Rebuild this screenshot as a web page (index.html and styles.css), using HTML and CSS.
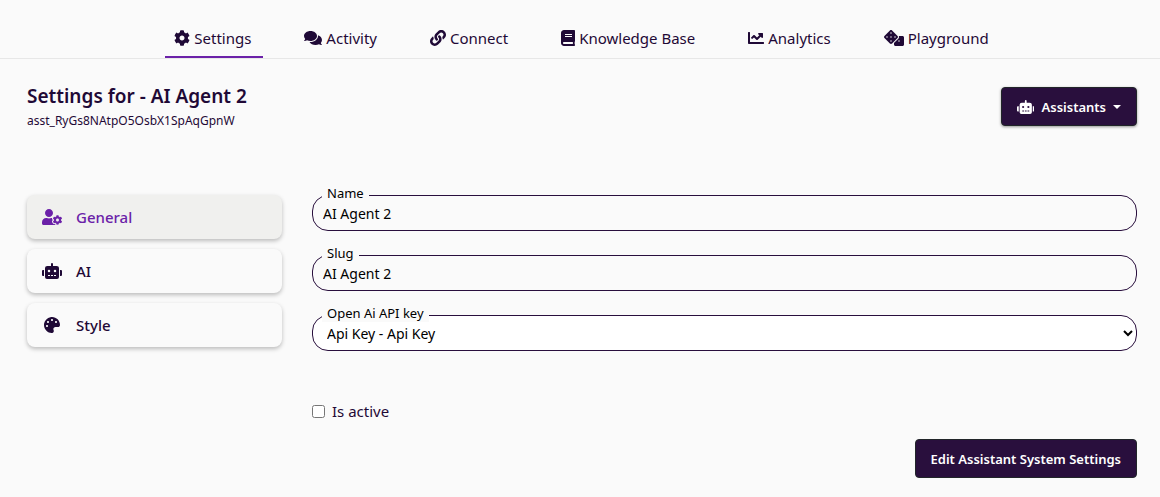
FILE: index.html
```html
<!DOCTYPE html>
<html lang="en">
<head>
  <meta charset="UTF-8">
  <meta name="viewport" content="width=device-width, initial-scale=1.0">
  <title>Assistant Settings</title>
  <link rel="stylesheet" href="styles.css">
</head>
<body>
  <!-- Robot icon is used in the button and the side menu -->
  <svg class="icon-defs" aria-hidden="true">
    <symbol id="icon-robot" viewBox="0 0 640 512">
      <path d="M32,224H64V416H32A31.962,31.962,0,0,1,0,384V256A31.962,31.962,0,0,1,32,224Zm512-48V448a64.063,64.063,0,0,1-64,64H160a64.063,64.063,0,0,1-64-64V176a79.974,79.974,0,0,1,80-80H288V32a32,32,0,0,1,64,0V96H464A79.974,79.974,0,0,1,544,176ZM264,256a40,40,0,1,0-40,40A39.997,39.997,0,0,0,264,256Zm-8,128H192v32h64Zm96,0H288v32h64ZM456,256a40,40,0,1,0-40,40A39.997,39.997,0,0,0,456,256Zm-8,128H384v32h64ZM640,256V384a31.962,31.962,0,0,1-32,32H576V224h32A31.962,31.962,0,0,1,640,256Z"/>
    </symbol>
  </svg>

  <nav class="tabs">
    <a href="#settings" class="tab active">
      <svg class="icon" viewBox="0 0 512 512"><path d="M487.4 315.7l-42.6-24.6c4.3-23.2 4.3-47 0-70.2l42.6-24.6c4.9-2.8 7.1-8.6 5.5-14-11.1-35.6-30-67.8-54.7-94.6-3.8-4.1-10-5.1-14.8-2.3L380.8 110c-17.9-15.4-38.5-27.3-60.8-35.1V25.8c0-5.6-3.9-10.5-9.4-11.7-36.7-8.2-74.3-7.8-109.2 0-5.5 1.2-9.4 6.1-9.4 11.7V75c-22.2 7.9-42.8 19.8-60.8 35.1L88.7 85.5c-4.9-2.8-11-1.9-14.8 2.3-24.7 26.7-43.6 58.9-54.7 94.6-1.7 5.4.6 11.2 5.5 14L67.3 221c-4.3 23.2-4.3 47 0 70.2l-42.6 24.6c-4.9 2.8-7.1 8.6-5.5 14 11.1 35.6 30 67.8 54.7 94.6 3.8 4.1 10 5.1 14.8 2.3l42.6-24.6c17.9 15.4 38.5 27.3 60.8 35.1v49.2c0 5.6 3.9 10.5 9.4 11.7 36.7 8.2 74.3 7.8 109.2 0 5.5-1.2 9.4-6.1 9.4-11.7v-49.2c22.2-7.9 42.8-19.8 60.8-35.1l42.6 24.6c4.9 2.8 11 1.9 14.8-2.3 24.7-26.7 43.6-58.9 54.7-94.6 1.5-5.5-.7-11.3-5.6-14.1zM256 336c-44.1 0-80-35.9-80-80s35.9-80 80-80 80 35.9 80 80-35.9 80-80 80z"/></svg>
      Settings
    </a>
    <a href="#activity" class="tab">
      <svg class="icon" viewBox="0 0 576 512"><path d="M416 192c0-88.4-93.1-160-208-160S0 103.6 0 192c0 34.3 14.1 65.9 38 92-13.4 30.2-35.5 54.2-35.8 54.5-2.2 2.3-2.8 5.7-1.5 8.7S4.8 352 8 352c36.6 0 66.9-12.3 88.7-25 32.2 15.7 70.3 25 111.3 25 114.9 0 208-71.6 208-160zm122 220c23.9-26 38-57.7 38-92 0-66.9-53.5-124.2-129.3-148.1.9 6.6 1.3 13.3 1.3 20.1 0 105.9-107.7 192-240 192-10.8 0-21.3-.8-31.7-1.9C207.8 439.6 281.8 480 368 480c41 0 79.1-9.2 111.3-25 21.8 12.7 52.1 25 88.7 25 3.2 0 6.1-1.9 7.3-4.8 1.3-2.9.7-6.3-1.5-8.7-.3-.3-22.4-24.2-35.8-54.5z"/></svg>
      Activity
    </a>
    <a href="#connect" class="tab">
      <svg class="icon" viewBox="0 0 512 512"><path d="M326.612 185.391c59.747 59.809 58.927 155.698.36 214.59-.11.12-.24.25-.36.37l-67.2 67.2c-59.27 59.27-155.699 59.262-214.96 0-59.27-59.26-59.27-155.7 0-214.96l37.106-37.106c9.84-9.84 26.786-3.3 27.294 10.606.648 17.722 3.826 35.527 9.69 52.721 1.986 5.822.567 12.262-3.783 16.612l-13.087 13.087c-28.026 28.026-28.905 73.66-1.155 101.96 28.024 28.579 74.086 28.749 102.325.51l67.2-67.19c28.191-28.191 28.073-73.757 0-101.83-3.701-3.694-7.429-6.564-10.341-8.569a16.037 16.037 0 0 1-6.947-12.606c-.396-10.567 3.348-21.456 11.698-29.806l21.054-21.055c5.521-5.521 14.182-6.199 20.584-1.731a152.482 152.482 0 0 1 20.522 17.197zM467.547 44.449c-59.261-59.262-155.69-59.27-214.96 0l-67.2 67.2c-.12.12-.25.25-.36.37-58.566 58.892-59.387 154.781.36 214.59a152.454 152.454 0 0 0 20.521 17.196c6.402 4.468 15.064 3.789 20.584-1.731l21.054-21.055c8.35-8.35 12.094-19.239 11.698-29.806a16.037 16.037 0 0 0-6.947-12.606c-2.912-2.005-6.64-4.875-10.341-8.569-28.073-28.073-28.191-73.639 0-101.83l67.2-67.19c28.239-28.239 74.3-28.069 102.325.51 27.75 28.3 26.872 73.934-1.155 101.96l-13.087 13.087c-4.35 4.35-5.769 10.79-3.783 16.612 5.864 17.194 9.042 34.999 9.69 52.721.509 13.906 17.454 20.446 27.294 10.606l37.106-37.106c59.271-59.259 59.271-155.699.001-214.959z"/></svg>
      Connect
    </a>
    <a href="#knowledge" class="tab">
      <svg class="icon" viewBox="0 0 448 512"><path d="M448 360V24c0-13.3-10.7-24-24-24H96C43 0 0 43 0 96v320c0 53 43 96 96 96h328c13.3 0 24-10.7 24-24v-16c0-7.5-3.5-14.3-8.9-18.7-4.2-15.4-4.2-59.3 0-74.7 5.4-4.3 8.9-11.1 8.9-18.6zM128 134c0-3.3 2.7-6 6-6h212c3.3 0 6 2.7 6 6v20c0 3.3-2.7 6-6 6H134c-3.3 0-6-2.7-6-6v-20zm0 64c0-3.3 2.7-6 6-6h212c3.3 0 6 2.7 6 6v20c0 3.3-2.7 6-6 6H134c-3.3 0-6-2.7-6-6v-20zm253.4 250H96c-17.7 0-32-14.3-32-32 0-17.6 14.4-32 32-32h285.4c-1.9 17.1-1.9 46.9 0 64z"/></svg>
      Knowledge Base
    </a>
    <a href="#analytics" class="tab">
      <svg class="icon" viewBox="0 0 512 512"><path d="M496 384H64V80c0-8.84-7.16-16-16-16H16C7.16 64 0 71.16 0 80v336c0 17.67 14.33 32 32 32h464c8.84 0 16-7.16 16-16v-32c0-8.84-7.16-16-16-16zM464 96H345.94c-21.38 0-32.09 25.85-16.97 40.97l32.4 32.4L288 242.75l-73.37-73.37c-12.5-12.5-32.76-12.5-45.25 0l-68.69 68.69c-6.25 6.25-6.25 16.38 0 22.63l22.62 22.62c6.25 6.25 16.38 6.25 22.63 0L192 237.25l73.37 73.37c12.5 12.5 32.76 12.5 45.25 0l96-96 32.4 32.4c15.12 15.12 40.97 4.41 40.97-16.97V112c.01-8.84-7.15-16-15.99-16z"/></svg>
      Analytics
    </a>
    <a href="#playground" class="tab">
      <svg class="icon" viewBox="0 0 640 512"><path d="M592 192H473.26c12.69 29.59 7.12 65.2-17 89.32L320 417.58V464c0 26.51 21.49 48 48 48h224c26.51 0 48-21.49 48-48V240c0-26.51-21.49-48-48-48zM480 376c-13.25 0-24-10.75-24-24 0-13.26 10.75-24 24-24s24 10.74 24 24c0 13.25-10.75 24-24 24zm-46.37-186.7L258.7 14.37c-19.16-19.16-50.23-19.16-69.39 0L14.37 189.3c-19.16 19.16-19.16 50.23 0 69.39L189.3 433.63c19.16 19.16 50.23 19.16 69.39 0L433.63 258.7c19.16-19.17 19.16-50.24 0-69.4zM96 248c-13.25 0-24-10.75-24-24 0-13.26 10.75-24 24-24s24 10.74 24 24c0 13.25-10.75 24-24 24zm128 128c-13.25 0-24-10.75-24-24 0-13.26 10.75-24 24-24s24 10.74 24 24c0 13.25-10.75 24-24 24zm0-128c-13.25 0-24-10.75-24-24 0-13.26 10.75-24 24-24s24 10.74 24 24c0 13.25-10.75 24-24 24zm0-128c-13.25 0-24-10.75-24-24 0-13.26 10.75-24 24-24s24 10.74 24 24c0 13.25-10.75 24-24 24zm128 128c-13.25 0-24-10.75-24-24 0-13.26 10.75-24 24-24s24 10.74 24 24c0 13.25-10.75 24-24 24z"/></svg>
      Playground
    </a>
  </nav>

  <main class="container">
    <header class="page-header">
      <div>
        <h1>Settings for - AI Agent 2</h1>
        <p class="assistant-id">asst_RyGs8NAtpO5OsbX1SpAqGpnW</p>
      </div>
      <button type="button" class="btn btn-shadow">
        <svg class="icon btn-icon" viewBox="0 0 640 512"><use href="#icon-robot"/></svg>
        Assistants
        <span class="caret"></span>
      </button>
    </header>

    <div class="row">
      <aside class="sidebar">
        <a href="#general" class="menu-item active">
          <span class="menu-icon">
            <svg class="icon" viewBox="0 0 640 512"><path d="M610.5 373.3c2.6-14.1 2.6-28.5 0-42.6l25.8-14.9c3-1.7 4.3-5.2 3.3-8.5-6.7-21.6-18.2-41.2-33.2-57.4-2.3-2.5-6-3.1-9-1.4l-25.8 14.9c-10.9-9.3-23.4-16.5-36.9-21.3v-29.8c0-3.4-2.4-6.4-5.7-7.1-22.3-5-45-4.8-66.2 0-3.3.7-5.7 3.7-5.7 7.1v29.8c-13.5 4.8-26 12-36.9 21.3l-25.8-14.9c-2.9-1.7-6.7-1.1-9 1.4-15 16.2-26.5 35.8-33.2 57.4-1 3.3.4 6.8 3.3 8.5l25.8 14.9c-2.6 14.1-2.6 28.5 0 42.6l-25.8 14.9c-3 1.7-4.3 5.2-3.3 8.5 6.7 21.6 18.2 41.1 33.2 57.4 2.3 2.5 6 3.1 9 1.4l25.8-14.9c10.9 9.3 23.4 16.5 36.9 21.3v29.8c0 3.4 2.4 6.4 5.7 7.1 22.3 5 45 4.8 66.2 0 3.3-.7 5.7-3.7 5.7-7.1v-29.8c13.5-4.8 26-12 36.9-21.3l25.8 14.9c2.9 1.7 6.7 1.1 9-1.4 15-16.2 26.5-35.8 33.2-57.4 1-3.3-.4-6.8-3.3-8.5l-25.8-14.9zM496 400.5c-26.8 0-48.5-21.8-48.5-48.5s21.8-48.5 48.5-48.5 48.5 21.8 48.5 48.5-21.7 48.5-48.5 48.5zM224 256c70.7 0 128-57.3 128-128S294.7 0 224 0 96 57.3 96 128s57.3 128 128 128zm201.2 226.5c-2.3-1.2-4.6-2.6-6.8-3.9l-7.9 4.6c-6 3.4-12.8 5.3-19.6 5.3-10.9 0-21.4-4.6-28.9-12.6-18.3-19.8-32.3-43.9-40.2-69.6-5.5-17.7 1.9-36.4 17.9-45.7l7.9-4.6c-.1-2.6-.1-5.2 0-7.8l-7.9-4.6c-16-9.2-23.4-28-17.9-45.7.9-2.9 2.2-5.8 3.2-8.7-3.8-.3-7.5-1.2-11.4-1.2h-16.7c-22.2 10.2-46.9 16-72.9 16s-50.6-5.8-72.9-16h-16.7C60.2 288 0 348.2 0 422.4V464c0 26.5 21.5 48 48 48h352c10.1 0 19.5-3.2 27.2-8.5-1.2-3.8-2-7.7-2-11.8v-9.2z"/></svg>
          </span>
          General
        </a>
        <a href="#ai" class="menu-item">
          <span class="menu-icon">
            <svg class="icon" viewBox="0 0 640 512"><use href="#icon-robot"/></svg>
          </span>
          AI
        </a>
        <a href="#style" class="menu-item">
          <span class="menu-icon">
            <svg class="icon" viewBox="0 0 512 512"><path d="M204.3 5C104.9 24.4 24.8 104.3 5.2 203.4c-37 187 131.7 326.4 258.8 306.7 41.2-6.4 61.4-54.6 42.5-91.7-23.1-45.4 9.9-98.4 60.9-98.4h79.7c35.8 0 64.8-29.6 64.9-65.3C511.5 97.1 368.1-26.9 204.3 5zM96 320c-17.7 0-32-14.3-32-32s14.3-32 32-32 32 14.3 32 32-14.3 32-32 32zm32-128c-17.7 0-32-14.3-32-32s14.3-32 32-32 32 14.3 32 32-14.3 32-32 32zm128-64c-17.7 0-32-14.3-32-32s14.3-32 32-32 32 14.3 32 32-14.3 32-32 32zm128 64c-17.7 0-32-14.3-32-32s14.3-32 32-32 32 14.3 32 32-14.3 32-32 32z"/></svg>
          </span>
          Style
        </a>
      </aside>

      <form class="settings-form">
        <div class="form-group">
          <label for="name">Name</label>
          <input type="text" id="name" name="name" value="AI Agent 2">
        </div>

        <div class="form-group">
          <label for="slug">Slug</label>
          <input type="text" id="slug" name="slug" value="AI Agent 2">
        </div>

        <div class="form-group">
          <label for="api-key">Open Ai API key</label>
          <select id="api-key" name="api-key">
            <option>Api Key - Api Key</option>
          </select>
        </div>

        <div class="form-check">
          <input type="checkbox" id="is-active" name="is-active">
          <label for="is-active">Is active</label>
        </div>

        <div class="form-actions">
          <button type="submit" class="btn">Edit Assistant System Settings</button>
        </div>
      </form>
    </div>
  </main>
</body>
</html>
```

FILE: styles.css
```css
* {
  margin: 0;
  padding: 0;
  box-sizing: border-box;
  font-family: "Segoe UI", "Noto Sans", sans-serif;
}

body {
  background-color: #fafafa;
  color: #1f0936;
  font-size: 15px;
  line-height: 24px;
}

a {
  color: inherit;
  text-decoration: none;
}

.icon-defs {
  display: none;
}

.icon {
  height: 16px;
  fill: currentColor;
  flex-shrink: 0;
}

/* Top tabs */
.tabs {
  display: flex;
  justify-content: center;
  gap: 32px;
  padding: 18px 0 0 6px;
  border-bottom: 1px solid #e7e7e7;
}

.tab {
  display: flex;
  align-items: center;
  gap: 4px;
  padding: 8px 12px 6px 9px;
  border-bottom: 2px solid transparent;
}

.tab.active {
  border-bottom-color: #6b21a8;
}

/* Page header */
.container {
  padding: 24px 8px 16px 12px;
}

.page-header {
  display: flex;
  justify-content: space-between;
  align-items: flex-start;
  padding: 0 15px;
  margin-bottom: 64px;
}

.page-header h1 {
  font-size: 19px;
  font-weight: 600;
  line-height: 26px;
}

.assistant-id {
  margin-top: 2px;
  font-size: 12px;
  line-height: 20px;
}

.btn {
  display: inline-flex;
  align-items: center;
  height: 39px;
  padding: 0 15px;
  background-color: #290f3d;
  color: #ffffff;
  border: 1px solid #212529;
  border-radius: 4px;
  font-size: 13px;
  font-weight: 600;
  cursor: pointer;
}

.btn-shadow {
  margin-top: 4px;
  box-shadow: 0 1px 3px rgba(0, 0, 0, 0.4);
}

.btn-icon {
  height: 14px;
  margin-right: 7px;
}

.caret {
  margin-left: 7px;
  border-top: 4px solid #ffffff;
  border-left: 4px solid transparent;
  border-right: 4px solid transparent;
}

/* Side menu */
.row {
  display: flex;
}

.sidebar {
  width: 25%;
  padding: 0 15px;
}

.menu-item {
  display: flex;
  align-items: center;
  height: 44px;
  margin-bottom: 10px;
  padding: 0 14px;
  border-radius: 8px;
  box-shadow: 0 2px 4px rgba(0, 0, 0, 0.25);
  font-weight: 500;
}

.menu-item.active {
  background-color: #f0f0ee;
  color: #6b21a8;
}

.menu-icon {
  display: flex;
  justify-content: center;
  width: 21px;
  margin-right: 14px;
}

/* Settings form */
.settings-form {
  width: 75%;
  padding: 0 15px;
}

.form-group {
  position: relative;
  margin-bottom: 24px;
}

/* label sits on the top border of the field */
.form-group label {
  position: absolute;
  top: -11px;
  left: 10px;
  padding: 0 5px;
  background-color: #fafafa;
  color: #000000;
  font-size: 13px;
  line-height: 18px;
}

.form-group input,
.form-group select {
  display: block;
  width: 100%;
  height: 36px;
  padding: 0 10px;
  background-color: transparent;
  color: #000000;
  border: 1px solid #290f3d;
  border-radius: 16px;
  font-size: 14px;
}

.form-group select {
  padding: 0 0 0 10px;
  background-color: #ffffff;
}

.form-check {
  display: flex;
  align-items: center;
  gap: 7px;
  margin-top: 48px;
}

.form-check input {
  width: 13px;
  height: 13px;
}

.form-actions {
  display: flex;
  justify-content: flex-end;
  margin-top: 16px;
}
```
